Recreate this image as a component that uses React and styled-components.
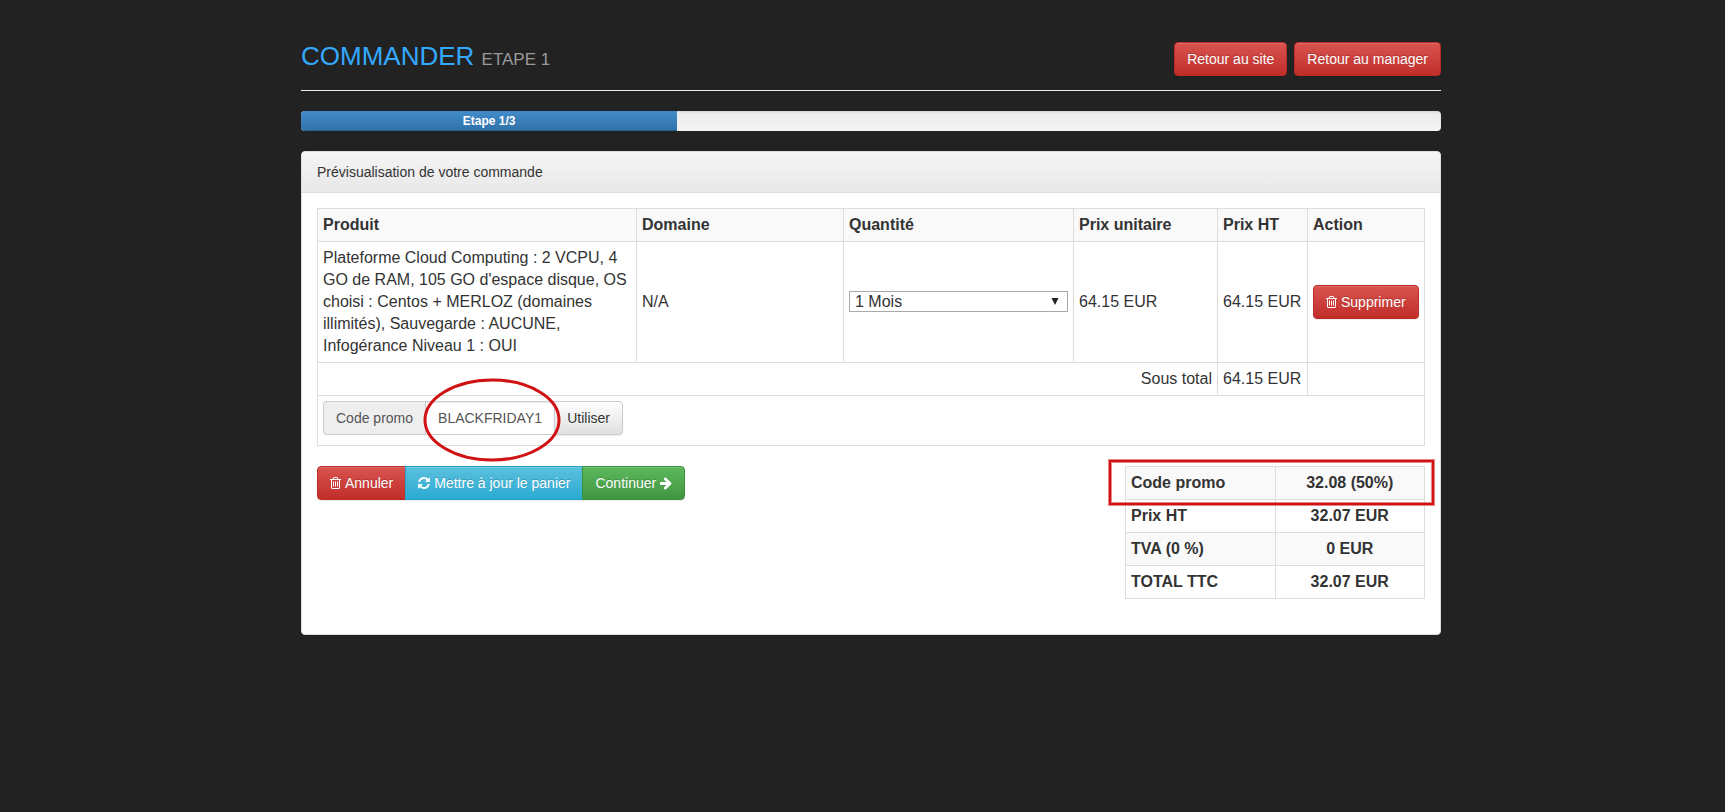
import React, { useState } from 'react';
import styled, { createGlobalStyle, css } from 'styled-components';

const GlobalStyle = createGlobalStyle`
  *, *::before, *::after {
    box-sizing: border-box;
  }

  body {
    margin: 0;
    padding-left: 17px;
    background: #222;
    color: #333;
    font-family: "Liberation Sans", Arial, sans-serif;
    font-size: 14px;
    line-height: 20px;
  }
`;

const Container = styled.main`
  max-width: 1170px;
  margin: 0 auto;
  padding: 42px 15px 20px;
`;

const PageHeader = styled.header`
  display: flex;
  justify-content: space-between;
  align-items: flex-start;
  padding-bottom: 14px;
  margin-bottom: 20px;
  border-bottom: 1px solid #eee;
`;

const Title = styled.h1`
  margin: 0;
  font-size: 26px;
  font-weight: 400;
  line-height: 28px;
  color: #33a9ff;

  small {
    font-size: 17px;
    color: #999;
  }
`;

const HeaderLinks = styled.nav`
  display: flex;
  gap: 7px;
`;

const tones = {
  danger: { from: '#d9534f', to: '#c12e2a', border: '#b92c28' },
  info: { from: '#5bc0de', to: '#2aabd2', border: '#28a4c9' },
  success: { from: '#5cb85c', to: '#419641', border: '#3e8f3e' },
};

const buttonStyles = css`
  display: inline-flex;
  align-items: center;
  gap: 4px;
  height: 34px;
  padding: 0 12px;
  border: 1px solid ${({ $tone }) => ($tone ? tones[$tone].border : '#ccc')};
  border-radius: 4px;
  background: ${({ $tone }) =>
    $tone
      ? `linear-gradient(${tones[$tone].from}, ${tones[$tone].to})`
      : 'linear-gradient(#fff, #e0e0e0)'};
  box-shadow: inset 0 1px 0 rgba(255, 255, 255, 0.15), 0 1px 1px rgba(0, 0, 0, 0.075);
  color: ${({ $tone }) => ($tone ? '#fff' : '#333')};
  text-shadow: ${({ $tone }) => ($tone ? '0 -1px 0 rgba(0, 0, 0, 0.2)' : '0 1px 0 #fff')};
  font-family: inherit;
  font-size: 14px;
  line-height: 20px;
  white-space: nowrap;
  text-decoration: none;
  cursor: pointer;
`;

const Button = styled.button`
  ${buttonStyles}
`;

const LinkButton = styled.a`
  ${buttonStyles}
`;

const ButtonGroup = styled.div`
  display: flex;

  > * + * {
    margin-left: -1px;
    border-top-left-radius: 0;
    border-bottom-left-radius: 0;
  }

  > *:not(:last-child) {
    border-top-right-radius: 0;
    border-bottom-right-radius: 0;
  }
`;

const Progress = styled.div`
  height: 20px;
  margin-bottom: 20px;
  overflow: hidden;
  border-radius: 4px;
  background: linear-gradient(#ebebeb, #f5f5f5);
  box-shadow: inset 0 1px 2px rgba(0, 0, 0, 0.1);
`;

const ProgressBar = styled.div`
  height: 100%;
  background: linear-gradient(#428bca, #3071a9);
  box-shadow: inset 0 -1px 0 rgba(0, 0, 0, 0.15);
  color: #fff;
  font-size: 12px;
  font-weight: 700;
  text-align: center;
`;

const Panel = styled.section`
  border: 1px solid #ddd;
  border-radius: 4px;
  background: #fff;
`;

const PanelHeading = styled.h2`
  margin: 0;
  padding: 10px 15px;
  border-bottom: 1px solid #ddd;
  border-radius: 3px 3px 0 0;
  background: linear-gradient(#f5f5f5, #e8e8e8);
  font-size: 14px;
  font-weight: 400;
`;

const PanelBody = styled.div`
  padding: 15px;
`;

const Table = styled.table`
  width: 100%;
  border-collapse: collapse;
  table-layout: fixed;
  font-size: 16px;
  line-height: 22px;

  th,
  td {
    padding: 5px;
    border: 1px solid #ddd;
    text-align: left;
    vertical-align: middle;
  }
`;

const OrderTable = styled(Table)`
  margin-bottom: 20px;

  thead th {
    background: #f9f9f9;
  }
`;

const SummaryTable = styled(Table)`
  th,
  td {
    width: 50%;
    font-weight: 700;
  }

  td {
    text-align: center;
  }

  tr:nth-child(odd) {
    background: #f9f9f9;
  }
`;

const Col = styled.col`
  width: ${({ $width }) => $width};
`;

const SubtotalLabel = styled.td`
  && {
    text-align: right;
  }
`;

const SelectWrap = styled.div`
  position: relative;
  display: flex;
  padding-bottom: 2px;

  svg {
    position: absolute;
    top: 7px;
    right: 9px;
    pointer-events: none;
  }
`;

const Select = styled.select`
  width: 100%;
  height: 21px;
  padding: 0 5px;
  appearance: none;
  border: 1px solid #a9a9a9;
  border-radius: 0;
  background: #fff;
  color: #333;
  font-family: inherit;
  font-size: 16px;
  line-height: 19px;
`;

const PromoGroup = styled.form`
  display: flex;
  width: 300px;
  margin-bottom: 5px;

  button {
    margin-left: -1px;
    border-radius: 0 4px 4px 0;
  }
`;

const PromoLabel = styled.label`
  padding: 6px 12px;
  border: 1px solid #ccc;
  border-right: 0;
  border-radius: 4px 0 0 4px;
  background: #eee;
  color: #555;
  font-size: 14px;
  line-height: 20px;
  white-space: nowrap;
`;

const PromoField = styled.div`
  position: relative;
  flex: 1;
  min-width: 0;
`;

const PromoInput = styled.input`
  display: block;
  width: 100%;
  height: 34px;
  padding: 6px 12px;
  border: 1px solid #ccc;
  border-radius: 0;
  background: #fff;
  box-shadow: inset 0 1px 1px rgba(0, 0, 0, 0.075);
  color: #555;
  font-family: inherit;
  font-size: 14px;
`;

const CircleMark = styled.svg`
  position: absolute;
  top: -24px;
  left: -3px;
  z-index: 1;
  pointer-events: none;
`;

const Footer = styled.div`
  display: flex;
  justify-content: space-between;
  align-items: flex-start;
  margin-bottom: 20px;
`;

const Summary = styled.div`
  position: relative;
  width: 300px;
`;

const BoxMark = styled.div`
  position: absolute;
  top: -6px;
  left: -16px;
  right: -9px;
  height: 45px;
  border: 2px solid #d01212;
  box-shadow: 0 0 0 1px rgba(208, 18, 18, 0.5), inset 0 0 0 1px rgba(208, 18, 18, 0.5);
  pointer-events: none;
`;

const TrashIcon = () => (
  <svg width="11" height="14" viewBox="192 0 1408 1792" fill="currentColor" aria-hidden="true">
    <path d="M704 736v576q0 14-9 23t-23 9h-64q-14 0-23-9t-9-23v-576q0-14 9-23t23-9h64q14 0 23 9t9 23zm256 0v576q0 14-9 23t-23 9h-64q-14 0-23-9t-9-23v-576q0-14 9-23t23-9h64q14 0 23 9t9 23zm256 0v576q0 14-9 23t-23 9h-64q-14 0-23-9t-9-23v-576q0-14 9-23t23-9h64q14 0 23 9t9 23zm128 724v-948h-896v948q0 22 7 40.5t14.5 27 10.5 8.5h832q3 0 10.5-8.5t14.5-27 7-40.5zm-672-1076h448l-48-117q-7-9-17-11h-317q-10 2-17 11zm928 32v64q0 14-9 23t-23 9h-96v948q0 83-47 143.5t-113 60.5h-832q-66 0-113-58.5t-47-141.5v-952h-96q-14 0-23-9t-9-23v-64q0-14 9-23t23-9h309l70-167q15-37 54-63t79-26h320q40 0 79 26t54 63l70 167h309q14 0 23 9t9 23z" />
  </svg>
);

const RefreshIcon = () => (
  <svg width="12" height="14" viewBox="128 0 1536 1792" fill="currentColor" aria-hidden="true">
    <path d="M1639 1056q0 5-1 7-64 268-268 434.5t-478 166.5q-146 0-282.5-55t-243.5-157l-129 129q-19 19-45 19t-45-19-19-45v-448q0-26 19-45t45-19h448q26 0 45 19t19 45-19 45l-137 137q71 66 161 102t187 36q134 0 250-65t186-179q11-17 53-117 8-23 30-23h192q13 0 22.5 9.5t9.5 22.5zm25-800v448q0 26-19 45t-45 19h-448q-26 0-45-19t-19-45 19-45l138-138q-148-137-349-137-134 0-250 65t-186 179q-11 17-53 117-8 23-30 23h-199q-13 0-22.5-9.5t-9.5-22.5v-7q65-268 270-434.5t480-166.5q146 0 284 55.5t245 156.5l130-129q19-19 45-19t45 19 19 45z" />
  </svg>
);

const ArrowIcon = () => (
  <svg width="12" height="14" viewBox="128 0 1536 1792" fill="currentColor" aria-hidden="true">
    <path d="M1600 960q0 54-37 91l-651 651q-39 37-91 37-51 0-90-37l-75-75q-38-38-38-91t38-91l293-293h-704q-52 0-84.5-37.5t-32.5-90.5v-128q0-53 32.5-90.5t84.5-37.5h704l-293-294q-38-36-38-90t38-90l75-75q38-38 90-38 53 0 91 38l651 651q37 35 37 90z" />
  </svg>
);

const totals = [
  ['Code promo', '32.08 (50%)'],
  ['Prix HT', '32.07 EUR'],
  ['TVA (0 %)', '0 EUR'],
  ['TOTAL TTC', '32.07 EUR'],
];

const STEP_PERCENT = 33;

const App = () => {
  const [code, setCode] = useState('BLACKFRIDAY1');

  return (
    <>
      <GlobalStyle />
      <Container>
        <PageHeader>
          <Title>
            COMMANDER <small>ETAPE 1</small>
          </Title>
          <HeaderLinks>
            <LinkButton $tone="danger" href="#site">Retour au site</LinkButton>
            <LinkButton $tone="danger" href="#manager">Retour au manager</LinkButton>
          </HeaderLinks>
        </PageHeader>

        <Progress>
          <ProgressBar style={{ width: `${STEP_PERCENT}%` }}>Etape 1/3</ProgressBar>
        </Progress>

        <Panel>
          <PanelHeading>Prévisualisation de votre commande</PanelHeading>
          <PanelBody>
            <OrderTable>
              <colgroup>
                <Col $width="auto" />
                <Col $width="207px" />
                <Col $width="230px" />
                <Col $width="144px" />
                <Col $width="90px" />
                <Col $width="117px" />
              </colgroup>
              <thead>
                <tr>
                  <th scope="col">Produit</th>
                  <th scope="col">Domaine</th>
                  <th scope="col" id="quantite">Quantité</th>
                  <th scope="col">Prix unitaire</th>
                  <th scope="col">Prix HT</th>
                  <th scope="col">Action</th>
                </tr>
              </thead>
              <tbody>
                <tr>
                  <td>
                    Plateforme Cloud Computing : 2 VCPU, 4 GO de RAM, 105 GO d'espace disque, OS
                    choisi : Centos + MERLOZ (domaines illimités), Sauvegarde : AUCUNE,
                    Infogérance Niveau 1 : OUI
                  </td>
                  <td>N/A</td>
                  <td>
                    <SelectWrap>
                      <Select aria-labelledby="quantite" defaultValue="1">
                        <option value="1">1 Mois</option>
                      </Select>
                      <svg width="8" height="7" viewBox="0 0 8 7" fill="#222" aria-hidden="true">
                        <path d="M0.5 0h7L4 7z" />
                      </svg>
                    </SelectWrap>
                  </td>
                  <td>64.15 EUR</td>
                  <td>64.15 EUR</td>
                  <td>
                    <Button $tone="danger" type="button">
                      <TrashIcon />
                      Supprimer
                    </Button>
                  </td>
                </tr>
                <tr>
                  <SubtotalLabel colSpan={4}>Sous total</SubtotalLabel>
                  <td>64.15 EUR</td>
                  <td />
                </tr>
                <tr>
                  <td colSpan={6}>
                    <PromoGroup onSubmit={(e) => e.preventDefault()}>
                      <PromoLabel htmlFor="promo">Code promo</PromoLabel>
                      <PromoField>
                        <PromoInput
                          id="promo"
                          type="text"
                          value={code}
                          onChange={(e) => setCode(e.target.value)}
                        />
                        <CircleMark width="140" height="86" viewBox="0 0 140 86" aria-hidden="true">
                          <ellipse cx="70" cy="43" rx="67" ry="40" fill="none" stroke="#d01212" strokeWidth="3" />
                        </CircleMark>
                      </PromoField>
                      <Button type="submit">Utiliser</Button>
                    </PromoGroup>
                  </td>
                </tr>
              </tbody>
            </OrderTable>

            <Footer>
              <ButtonGroup>
                <Button $tone="danger" type="button">
                  <TrashIcon />
                  Annuler
                </Button>
                <Button $tone="info" type="button">
                  <RefreshIcon />
                  Mettre à jour le panier
                </Button>
                <Button $tone="success" type="button">
                  Continuer
                  <ArrowIcon />
                </Button>
              </ButtonGroup>

              <Summary>
                <SummaryTable>
                  <tbody>
                    {totals.map(([label, amount]) => (
                      <tr key={label}>
                        <th scope="row">{label}</th>
                        <td>{amount}</td>
                      </tr>
                    ))}
                  </tbody>
                </SummaryTable>
                <BoxMark />
              </Summary>
            </Footer>
          </PanelBody>
        </Panel>
      </Container>
    </>
  );
};

export default App;
